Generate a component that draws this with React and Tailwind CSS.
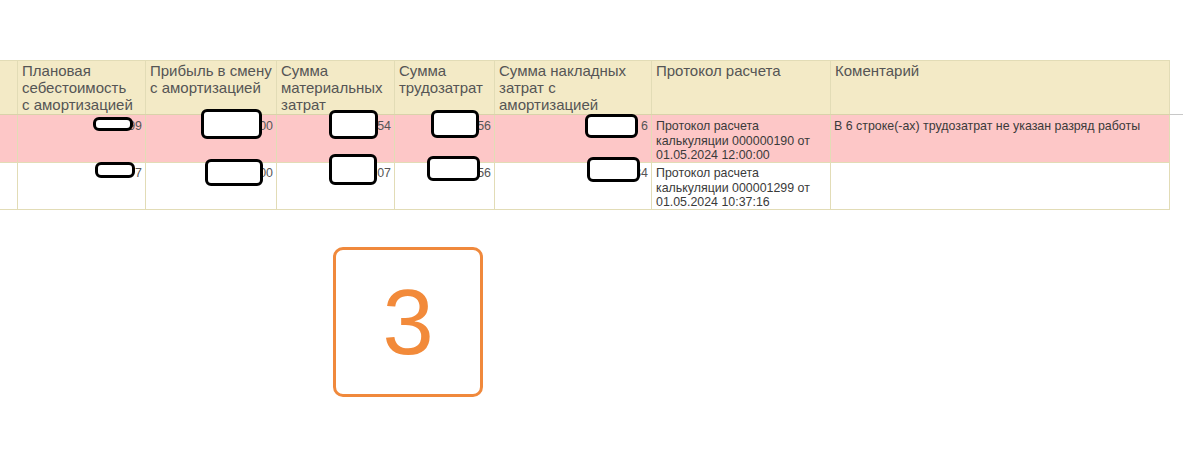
import React from "react";

const headers = [
  [],
  ["Плановая", "себестоимость", "с амортизацией"],
  ["Прибыль в смену", "с амортизацией"],
  ["Сумма", "материальных", "затрат"],
  ["Сумма", "трудозатрат"],
  ["Сумма накладных", "затрат с", "амортизацией"],
  ["Протокол расчета"],
  ["Коментарий"],
];

// redacted number cells: box position relative to the cell, plus visible tail digits
const rows = [
  {
    bg: "bg-[#fdc7c7]",
    h: "h-[48px]",
    pt: "pt-[4px]",
    nums: [
      { tail: "99", box: "left-[75px] top-[2px] w-[40px] h-[14px]" },
      { tail: "00", box: "left-[55px] top-[-6px] w-[61px] h-[30px]" },
      { tail: "54", box: "left-[52px] top-[-5px] w-[49px] h-[29px]" },
      { tail: "56", box: "left-[36px] top-[-5px] w-[48px] h-[28px]" },
      { tail: "6", box: "left-[90px] top-[-1px] w-[53px] h-[24px]" },
    ],
    protocol: ["Протокол расчета", "калькуляции 000000190 от", "01.05.2024 12:00:00"],
    comment: "В 6 строке(-ах) трудозатрат не указан разряд работы",
  },
  {
    bg: "bg-white",
    h: "h-[46px]",
    pt: "pt-[3px]",
    nums: [
      { tail: "7", box: "left-[77px] top-[-1px] w-[40px] h-[16px]" },
      { tail: "00", box: "left-[59px] top-[-4px] w-[58px] h-[27px]" },
      { tail: "07", box: "left-[52px] top-[-9px] w-[48px] h-[31px]" },
      { tail: "56", box: "left-[32px] top-[-7px] w-[53px] h-[25px]" },
      { tail: "34", box: "left-[92px] top-[-6px] w-[53px] h-[25px]" },
    ],
    protocol: ["Протокол расчета", "калькуляции 000001299 от", "01.05.2024 10:37:16"],
    comment: "",
  },
];

const cell = "border-r border-[#e2dcb6]";

export default function App() {
  return (
    <div className="w-[1200px] h-[453px] bg-white pt-[60px] font-['Liberation_Sans',Arial,sans-serif] text-[#555]">
      <div className="flex items-start">
        <div className="w-[1170px] border-t border-b border-[#e2dcb6]">
          {/* header */}
          <div className="grid grid-cols-[18px_128px_131px_118px_100px_157px_179px_339px] h-[54px] bg-[#f3eac6] border-b border-[#d9d2aa]">
            {headers.map((h, i) => (
              <div
                key={i}
                className={`${cell} px-[4px] pt-[1px] text-[15px] leading-[17px] whitespace-nowrap overflow-hidden`}
              >
                {h.map((l, j) => (
                  <div key={j}>{l}</div>
                ))}
              </div>
            ))}
          </div>

          {/* body rows */}
          {rows.map((r, ri) => (
            <div
              key={ri}
              className={`grid grid-cols-[18px_128px_131px_118px_100px_157px_179px_339px] ${r.h} ${r.bg} ${
                ri === 0 ? "border-b border-[#e2dcb6]" : ""
              }`}
            >
              <div className={cell}></div>
              {r.nums.map((n, i) => (
                <div
                  key={i}
                  className={`${cell} relative pr-[3px] ${r.pt} text-right text-[12.4px] leading-[14.5px] text-[#555]`}
                >
                  {n.tail}
                  <span
                    className={`absolute ${n.box} bg-white border-[3px] border-black rounded-[6px]`}
                  ></span>
                </div>
              ))}
              <div className={`${cell} pl-[4px] ${r.pt} text-[12.4px] leading-[14.5px] text-[#3a3a3a] whitespace-nowrap`}>
                {r.protocol.map((l, i) => (
                  <div key={i}>{l}</div>
                ))}
              </div>
              <div className={`${cell} pl-[3px] ${r.pt} text-[12.4px] leading-[14.5px] text-[#3a3a3a]`}>
                {r.comment}
              </div>
            </div>
          ))}
        </div>
        <div className="w-[13px] h-[55px] border-b border-[#c8c8c8]"></div>
      </div>

      <div className="ml-[333px] mt-[37px] w-[150px] h-[150px] border-[3px] border-[#f0893c] rounded-[10px] flex items-center justify-center">
        <span className="text-[92px] leading-none text-[#f28a3a] font-['Liberation_Sans',Arial,sans-serif]">
          3
        </span>
      </div>
    </div>
  );
}
